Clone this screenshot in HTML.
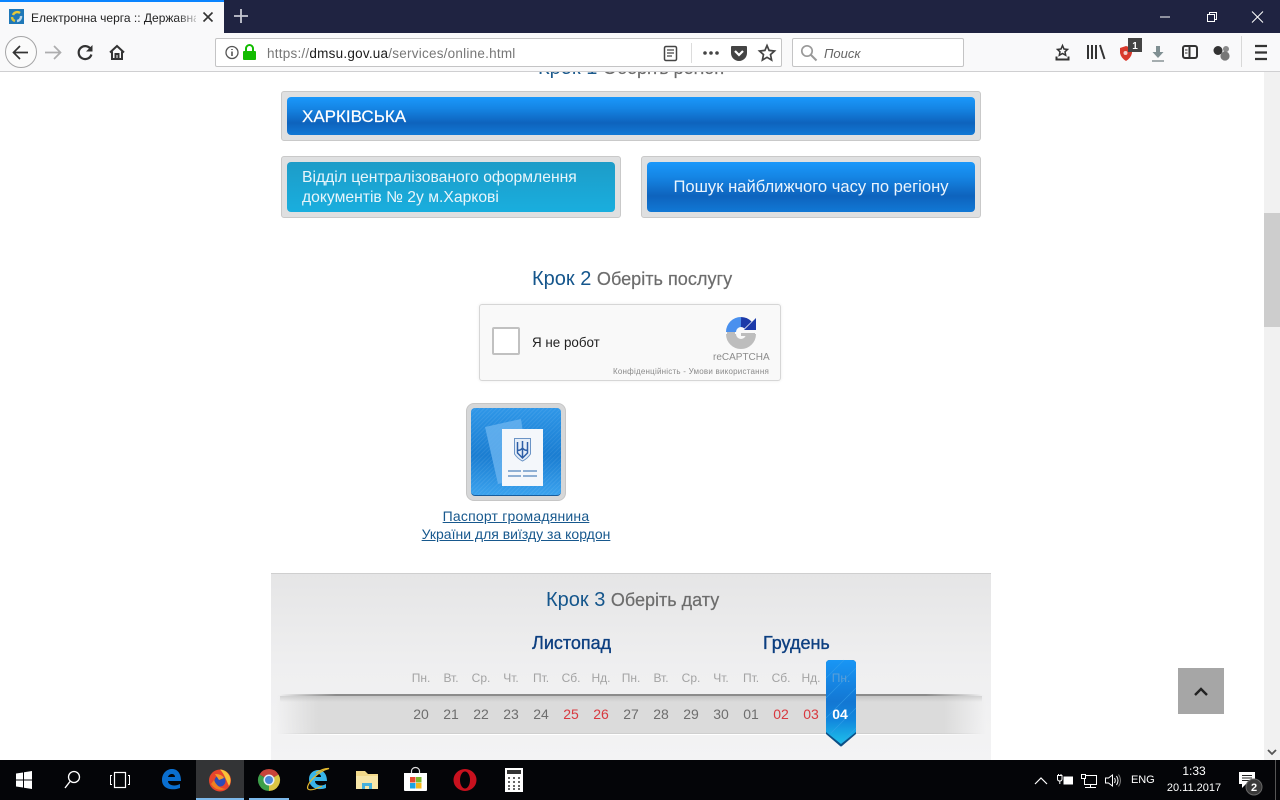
<!DOCTYPE html>
<html lang="uk"><head><meta charset="utf-8"><title>Електронна черга</title>
<style>
*{box-sizing:border-box}
html,body{margin:0;padding:0;width:1280px;height:800px;overflow:hidden;background:#fff;font-family:"Liberation Sans","DejaVu Sans",sans-serif}
.a{position:absolute}
.t{position:absolute;white-space:nowrap;line-height:1}
svg{position:absolute;overflow:visible}
.outer{position:absolute;background:#dfe0e1;border:1px solid #c9c9c9;border-radius:3px}
.inner{position:absolute;border-radius:4px;background:linear-gradient(#1a98fb 0%,#1585e4 30%,#0e63bd 68%,#1178d5 100%);color:#f4f9ff}
.d{position:absolute;top:672px;width:30px;text-align:center;font-size:12px;line-height:12px;color:#a3a3a3}
.n{position:absolute;top:707px;width:30px;text-align:center;font-size:14px;line-height:14px;color:#6e6e6e}
.r{color:#d8393f}
</style></head><body>

<!-- page -->
<div class="a" style="left:0;top:72px;width:1264px;height:688px;background:#fff"></div>
<div class="t" style="left:538px;top:58px;font-size:20px;color:#1c5a8c">Крок 1 <span style="color:#6b6b6b;font-size:18px;-webkit-text-stroke:.2px #6b6b6b">Оберіть регіон</span></div>

<div class="outer" style="left:281px;top:91px;width:700px;height:50px"></div>
<div class="inner" style="left:287px;top:97px;width:688px;height:38px"></div>
<div class="t" style="left:302px;top:108px;font-size:17px;color:#fff;-webkit-text-stroke:.2px #fff">ХАРКІВСЬКА</div>

<div class="outer" style="left:281px;top:156px;width:340px;height:62px"></div>
<div class="inner" style="left:287px;top:162px;width:328px;height:50px;background:linear-gradient(#1d9cc8,#19aede)"></div>
<div class="t" style="left:302px;top:168px;font-size:15.7px;line-height:20px;color:#e7f5fb;white-space:nowrap">Відділ централізованого оформлення<br>документів № 2у м.Харкові</div>

<div class="outer" style="left:641px;top:156px;width:340px;height:62px"></div>
<div class="inner" style="left:647px;top:162px;width:328px;height:50px"></div>
<div class="t" style="left:647px;width:328px;text-align:center;top:179px;font-size:16.6px;color:#eaf4fd">Пошук найближчого часу по регіону</div>

<div class="t" style="left:532px;top:269px;font-size:20px;color:#15568c">Крок 2 <span style="font-size:18.1px;color:#6c6c6c;-webkit-text-stroke:.2px #6c6c6c">Оберіть послугу</span></div>

<!-- recaptcha -->
<div class="a" style="left:479px;top:304px;width:302px;height:77px;background:#f9f9f9;border:1px solid #d6d6d6;border-radius:3px;box-shadow:0 0 3px rgba(0,0,0,.08)"></div>
<div class="a" style="left:492px;top:327px;width:28px;height:28px;background:#fff;border:2px solid #c1c1c1;border-radius:2px"></div>
<div class="t" style="left:532px;top:336px;font-size:13.4px;color:#222">Я не робот</div>
<svg style="left:725px;top:315px" width="32" height="32" viewBox="0 0 32 32">
<path d="M6 17 A10 10 0 0 1 16 7" fill="none" stroke="#4a90ee" stroke-width="10"/>
<path d="M2 12 H11 V17 H2 Z" fill="#4a90ee"/>
<path d="M16 7 A10 10 0 0 1 23 10" fill="none" stroke="#1c3aa9" stroke-width="10"/>
<path d="M31 3 V15 H19 Z" fill="#1c3aa9"/>
<path d="M26 19 A10 10 0 0 1 6 19" fill="none" stroke="#bdbdbd" stroke-width="10"/>
<path d="M2 17 H10 V20 H2 Z M16 18 H30 V21 H16 Z" fill="#bdbdbd"/>
</svg>
<div class="t" style="left:713px;top:353px;font-size:10px;color:#8c8c8c">reCAPTCHA</div>
<div class="t" style="left:613px;top:368px;font-size:8px;color:#8a8a8a;letter-spacing:.22px">Конфіденційність - Умови використання</div>

<!-- service tile -->
<div class="a" style="left:466px;top:403px;width:100px;height:98px;background:#d6d7d8;border:1px solid #c6c6c6;border-radius:8px"></div>
<div class="a" style="left:471px;top:408px;width:90px;height:88px;border-radius:4px;background:repeating-linear-gradient(135deg,rgba(255,255,255,.07) 0 1px,transparent 1px 3px),linear-gradient(#2f97e8,#1a7dd1 55%,#3aa2ee);border-bottom:1px solid #175d9e"></div>
<svg style="left:471px;top:408px" width="90" height="88" viewBox="0 0 90 88">
<polygon points="14,19 50,11 59,70 27,76" fill="#66b2ef" opacity=".85"/>
<rect x="31" y="21" width="41" height="57" fill="#f4f7fb"/>
<path d="M43.500 30.500 H59.500 V46 Q56 51 51.500 53 Q47 51 43.500 46 Z" fill="#e6eef8" stroke="#6b94c6" stroke-width="1"/>
<path d="M46.500 34 V45 L51.500 50 L56.500 45 V34 M51.500 33 V49 M46.500 42 Q49 43 51.500 40 Q54 43 56.500 42" fill="none" stroke="#2d5ea6" stroke-width="1.500"/>
<path d="M37 63 H50 M52 63 H66 M37 68 H50 M52 68 H66" stroke="#6d97c8" stroke-width="1.400"/>
</svg>
<div class="t" style="left:396px;width:240px;text-align:center;top:507px;font-size:14px;line-height:18px;color:#17588d;text-decoration:underline"><span style="letter-spacing:.2px">Паспорт громадянина</span><br>України для виїзду за кордон</div>

<!-- step 3 panel -->
<div class="a" style="left:271px;top:573px;width:720px;height:187px;background:linear-gradient(#e5e5e6,#efeff0 50%,#f3f3f4);border-top:1px solid #cfcfcf"></div>
<div class="t" style="left:546px;top:590px;font-size:20px;color:#15568c">Крок 3 <span style="font-size:18px;color:#6c6c6c;-webkit-text-stroke:.2px #6c6c6c">Оберіть дату</span></div>
<div class="t" style="left:532px;top:634px;font-size:18px;color:#0d3f80;-webkit-text-stroke:.35px #0d3f80">Листопад</div>
<div class="t" style="left:763px;top:634px;font-size:18px;color:#0d3f80;-webkit-text-stroke:.35px #0d3f80">Грудень</div>

<div class="a" style="left:276px;top:695px;width:710px;height:39px;background:linear-gradient(90deg,rgba(218,218,218,0) 0,#dbdbdb 42px,#dbdbdb 668px,rgba(218,218,218,0) 100%)"></div>
<div class="a" style="left:280px;top:694px;width:702px;height:2px;background:linear-gradient(90deg,rgba(110,110,110,0),#8b8b8b 8%,#8b8b8b 92%,rgba(110,110,110,0))"></div>
<div class="a" style="left:280px;top:696px;width:702px;height:6px;background:linear-gradient(rgba(130,130,130,.25),rgba(130,130,130,0))"></div>
<div class="a" style="left:280px;top:733px;width:702px;height:1px;background:linear-gradient(90deg,rgba(190,190,190,0),#cfcfcf 8%,#cfcfcf 92%,rgba(190,190,190,0))"></div>
<div class="a" style="left:280px;top:734px;width:702px;height:1px;background:linear-gradient(90deg,rgba(255,255,255,0),#fff 8%,#fff 92%,rgba(255,255,255,0))"></div>

<svg style="left:826px;top:660px" width="30" height="87" viewBox="0 0 30 87">
<defs><linearGradient id="rb" x1="0" y1="0" x2="0" y2="1"><stop offset="0" stop-color="#1996f5"/><stop offset=".5" stop-color="#1377d3"/><stop offset=".72" stop-color="#1288dd"/><stop offset="1" stop-color="#1dc0ea"/></linearGradient></defs>
<path d="M4 0 H26 Q30 0 30 4 V74 L16 86 Q15 87 14 86 L0 74 V4 Q0 0 4 0 Z" fill="#0d4f86"/>
<path d="M4 0 H26 Q30 0 30 4 V72 L15 84 L0 72 V4 Q0 0 4 0 Z" fill="url(#rb)"/>
<path d="M0 18 L18 0 M0 38 L30 8 M0 58 L30 28 M5 73 L30 48 M15 83 L30 68" stroke="#3aa3ec" stroke-width=".6" opacity=".7"/>
</svg>

<div class="d" style="left:406px">Пн.</div><div class="d" style="left:436px">Вт.</div><div class="d" style="left:466px">Ср.</div><div class="d" style="left:496px">Чт.</div><div class="d" style="left:526px">Пт.</div><div class="d" style="left:556px">Сб.</div><div class="d" style="left:586px">Нд.</div><div class="d" style="left:616px">Пн.</div><div class="d" style="left:646px">Вт.</div><div class="d" style="left:676px">Ср.</div><div class="d" style="left:706px">Чт.</div><div class="d" style="left:736px">Пт.</div><div class="d" style="left:766px">Сб.</div><div class="d" style="left:796px">Нд.</div><div class="d" style="left:826px;color:#5b9fd8">Пн.</div>

<div class="n" style="left:406px">20</div><div class="n" style="left:436px">21</div><div class="n" style="left:466px">22</div><div class="n" style="left:496px">23</div><div class="n" style="left:526px">24</div><div class="n r" style="left:556px">25</div><div class="n r" style="left:586px">26</div><div class="n" style="left:616px">27</div><div class="n" style="left:646px">28</div><div class="n" style="left:676px">29</div><div class="n" style="left:706px">30</div><div class="n" style="left:736px">01</div><div class="n r" style="left:766px">02</div><div class="n r" style="left:796px">03</div><div class="n" style="left:825px;color:#fff;font-weight:700">04</div>

<!-- back to top -->
<div class="a" style="left:1178px;top:668px;width:46px;height:46px;background:#a6a6a6"></div>
<svg style="left:1178px;top:668px" width="46" height="46"><path d="M17 27 L23 21 L29 27" fill="none" stroke="#222" stroke-width="2.400"/></svg>

<!-- scrollbar -->
<div class="a" style="left:1264px;top:72px;width:16px;height:688px;background:#f1f1f1"></div>
<div class="a" style="left:1264px;top:213px;width:16px;height:114px;background:#cdcdcd"></div>
<svg style="left:1264px;top:744px" width="16" height="16"><path d="M4 6 L8 10 L12 6" fill="none" stroke="#555" stroke-width="1.800"/></svg>

<!-- title bar -->
<div class="a" style="left:0;top:0;width:1280px;height:33px;background:#1f2341"></div>
<div class="a" style="left:0;top:0;width:224px;height:33px;background:#f9f9fa"></div>
<div class="a" style="left:0;top:0;width:224px;height:2px;background:#0a84ff"></div>
<div class="a" style="left:9px;top:9px;width:15px;height:15px;background:#1f78b8"></div>
<svg style="left:9px;top:9px" width="15" height="15" viewBox="0 0 15 15"><path d="M4 6 A4.500 4.500 0 0 1 11 4" fill="none" stroke="#e7c93a" stroke-width="2.400"/><path d="M12 7 A4.500 4.500 0 0 1 8 12" fill="none" stroke="#bcd9ea" stroke-width="2.400"/><path d="M6 12 A4.500 4.500 0 0 1 3 8" fill="none" stroke="#d9c43a" stroke-width="2.400"/></svg>
<div class="t" style="left:31px;top:11px;width:165px;overflow:hidden;font-size:12px;line-height:14px;color:#222;-webkit-mask-image:linear-gradient(90deg,#000 145px,rgba(0,0,0,.25) 165px)">Електронна черга :: Державна</div>
<svg style="left:202px;top:11px" width="12" height="12"><path d="M1.500 1.500 L10.500 10.500 M10.500 1.500 L1.500 10.500" stroke="#333" stroke-width="1.600"/></svg>
<svg style="left:233px;top:8px" width="16" height="16"><path d="M8 1 V15 M1 8 H15" stroke="#c6c8d2" stroke-width="1.800"/></svg>
<svg style="left:1160px;top:11px" width="110" height="12"><path d="M0 6 H10" stroke="#fff" stroke-width="1"/><path d="M47.500 3.500 H54.500 V10.500 H47.500 Z M49.500 3.500 V1.500 H56.500 V8.500 H54.500" fill="none" stroke="#fff"/><path d="M92 0.500 L103 11.500 M103 0.500 L92 11.500" stroke="#fff" stroke-width="1"/></svg>

<!-- toolbar -->
<div class="a" style="left:0;top:33px;width:1280px;height:39px;background:#f9f9fa;border-bottom:1px solid #cfcfd1"></div>
<div class="a" style="left:5px;top:36px;width:32px;height:32px;border:1px solid #a5a5a6;border-radius:50%;background:#fbfbfb"></div>
<svg style="left:0;top:33px" width="130" height="39" viewBox="0 0 130 39">
<path d="M13.500 19.500 H28 M20 13 L13.500 19.500 L20 26" fill="none" stroke="#333" stroke-width="1.700"/>
<path d="M45 19.500 H60 M54 13 L60.500 19.500 L54 26" fill="none" stroke="#adadae" stroke-width="1.700"/>
<path d="M90.600 16 A6.500 6.500 0 1 0 91.400 21.500" fill="none" stroke="#333" stroke-width="2.200"/><path d="M92.500 12 V18.500 H86 Z" fill="#333"/>
<path d="M110 19.500 L117 13 L124 19.500 M112 18.500 V26 H122 V18.500 M115.500 26 V21 H118.500 V26" fill="none" stroke="#333" stroke-width="2"/>
</svg>

<div class="a" style="left:215px;top:38px;width:567px;height:29px;background:#fff;border:1px solid #c4c4c5;border-radius:2px"></div>
<svg style="left:215px;top:38px" width="567" height="29" viewBox="0 0 567 29">
<circle cx="17" cy="14.500" r="6" fill="none" stroke="#555" stroke-width="1.300"/><path d="M17 13.500 V18 M17 11 V12" stroke="#555" stroke-width="1.600"/>
<rect x="28" y="13" width="13" height="9" rx="1" fill="#12bc00"/><path d="M31 13 V10.500 A3.500 3.500 0 0 1 38 10.500 V13" fill="none" stroke="#12bc00" stroke-width="2"/>
<rect x="449.500" y="8.500" width="12" height="14" rx="1.500" fill="none" stroke="#444" stroke-width="1.500"/><path d="M452 12 H459 M452 15 H459 M452 18 H457" stroke="#444" stroke-width="1.200"/>
<path d="M476.500 5 V25" stroke="#dcdcdc"/>
<circle cx="490" cy="15" r="1.800" fill="#444"/><circle cx="496" cy="15" r="1.800" fill="#444"/><circle cx="502" cy="15" r="1.800" fill="#444"/>
<path d="M516 8 H531 Q532 8 532 9 V15 A8 8 0 0 1 516 15 V9 Q516 8 517 8 Z" fill="#444"/><path d="M520 13 L524 17 L528 13" fill="none" stroke="#fff" stroke-width="2.200"/>
<path d="M552 7.500 L554.100 12.400 L559.500 13 L555.500 16.600 L556.600 22 L552 19.300 L547.400 22 L548.500 16.600 L544.500 13 L549.900 12.400 Z" fill="none" stroke="#444" stroke-width="1.700"/>
</svg>
<div class="t" style="left:267px;top:47px;font-size:13.5px;color:#777;letter-spacing:.235px">https://<span style="color:#1c1c1c">dmsu.gov.ua</span>/services/online.html</div>

<div class="a" style="left:792px;top:38px;width:172px;height:29px;background:#fff;border:1px solid #c4c4c5;border-radius:2px"></div>
<svg style="left:800px;top:44px" width="18" height="18"><circle cx="7" cy="7" r="5.200" fill="none" stroke="#999" stroke-width="1.700"/><path d="M11 11 L16.500 16.500" stroke="#999" stroke-width="2"/></svg>
<div class="t" style="left:824px;top:47px;font-size:13px;font-style:italic;color:#666">Поиск</div>

<svg style="left:1040px;top:33px" width="240" height="39" viewBox="0 0 240 39">
<path d="M22.500 12.500 L24 16 L27.500 16.400 L25 18.800 L25.700 22.300 L22.500 20.500 L19.300 22.300 L20 18.800 L17.500 16.400 L21 16 Z" fill="none" stroke="#333" stroke-width="1.500"/><path d="M16.500 23.500 V26.500 H28.500 V23.500" fill="none" stroke="#333" stroke-width="2"/>
<path d="M48 12 V26 M52 12 V26 M56 12 V26" stroke="#333" stroke-width="2"/><path d="M60 12 L64.500 26" stroke="#333" stroke-width="2"/>
<path d="M80 15 L86 13 L92 15 V20 Q91 25 86 28 Q81 25 80 20 Z" fill="#d8392c"/><circle cx="85.500" cy="20" r="2" fill="#f2d0cc"/>
<rect x="88" y="5" width="14" height="14" fill="#444"/>
<text x="95" y="16" font-size="10" font-weight="700" text-anchor="middle" fill="#fff" font-family="Liberation Sans">1</text>
<path d="M118 13 V20" stroke="#7f8f92" stroke-width="4"/><path d="M112.500 19 H123.500 L118 25 Z" fill="#7f8f92"/><path d="M112 28 H124" stroke="#a5adaf" stroke-width="2"/>
<rect x="143" y="13" width="14" height="12" rx="2" fill="none" stroke="#333" stroke-width="2"/><path d="M149.500 13 V25" stroke="#333" stroke-width="2"/><path d="M145 17 H147.500 M145 20 H147.500" stroke="#333" stroke-width="1"/>
<circle cx="178" cy="17.500" r="4.500" fill="#333"/><circle cx="186" cy="16" r="3" fill="#8a8a8a"/><circle cx="185" cy="23" r="4.600" fill="#777"/>
<path d="M201.500 3 V34" stroke="#d8d8d8"/>
<path d="M215 13 H227 M215 19.500 H227 M215 26 H227" stroke="#333" stroke-width="2.200"/>
</svg>

<!-- taskbar -->
<div class="a" style="left:0;top:760px;width:1280px;height:40px;background:#040508"></div>
<div class="a" style="left:196px;top:760px;width:48px;height:40px;background:#333436"></div>
<div class="a" style="left:196px;top:798px;width:48px;height:2px;background:#7cb8ea"></div>
<div class="a" style="left:249px;top:798px;width:40px;height:2px;background:#7cb8ea"></div>
<svg style="left:0;top:760px" width="540" height="40" viewBox="0 0 540 40">
<path d="M16 13.500 L23 12.500 V19.500 H16 Z M24 12.300 L32 11 V19.500 H24 Z M16 20.500 H23 V27.500 L16 26.500 Z M24 20.500 H32 V29 L24 27.700 Z" fill="#fff"/>
<circle cx="74" cy="17" r="5.500" fill="none" stroke="#fff" stroke-width="1.300"/><path d="M70 21.500 L65 28" stroke="#fff" stroke-width="1.400"/>
<rect x="114.500" y="12.500" width="11" height="15" fill="none" stroke="#fff" stroke-width="1.200"/><path d="M112 15.500 H110.500 V24.500 H112 M128 15.500 H129.500 V24.500 H128" fill="none" stroke="#fff"/>
<path d="M162 20 C162 13 167 9 172 9 C178 9 181 14 181 21 H168 C168 25 174 27 180 24 V28 C172 31 162 29 162 20 Z M168 17 H175 C175 13 169 13 168 17 Z" fill="#0a6fd0" fill-rule="evenodd"/>
<circle cx="220" cy="20.500" r="11" fill="#e8452c"/><path d="M220 9.500 A11 11 0 0 1 229 26 C226 20 225 15 220 9.500 Z" fill="#f7c33a"/><circle cx="220" cy="21" r="5.500" fill="#2f4bb5"/><path d="M215 14 Q222 14 224 18 L219 20 Z" fill="#f79a2a"/><path d="M211 24 Q216 32 226 29 Q217 28 214 20 Z" fill="#f0801f"/>
<path d="M262.070 16 A8 8 0 0 1 275.930 16" fill="none" stroke="#c8443a" stroke-width="6"/>
<path d="M275.930 16 A8 8 0 0 1 269 28" fill="none" stroke="#d9c544" stroke-width="6"/>
<path d="M269 28 A8 8 0 0 1 262.070 16" fill="none" stroke="#3d9f4a" stroke-width="6"/>
<circle cx="269" cy="20" r="5.500" fill="#e6eef8"/><circle cx="269" cy="20" r="4" fill="#4a86d8"/>
<path d="M309 19 C309 13 314 10 318 10 C324 10 327 15 327 21 H315 C315 25 321 27 326 24 V28 C318 31 309 28 309 19 Z M315 17 H321 C321 13 316 13 315 17 Z" fill="#38b4e8" fill-rule="evenodd"/>
<path d="M308 29 C305 25 318 11 329 8.500 C326 8 320 10 316 13 M308 29 C310 31 316 29 322 26" fill="none" stroke="#e3b92f" stroke-width="1.200"/>
<path d="M356 11 H365 L368 14 H378 V29 H356 Z" fill="#f2d98a"/><path d="M356 16 H378 V29 H356 Z" fill="#f7e6a8"/><path d="M362 29 V23 H372 V29 H369 V26 H365 V29 Z" fill="#46b1dc"/>
<path d="M404 13 H427 V30 Q427 31 426 31 H405 Q404 31 404 30 Z" fill="#fff"/><path d="M411.500 13 V11 A4 3.500 0 0 1 419.500 11 V13" fill="none" stroke="#ddd" stroke-width="1.200"/><rect x="410" y="17" width="5.500" height="5.500" fill="#e74a2f"/><rect x="416" y="17" width="5.500" height="5.500" fill="#7db82c"/><rect x="410" y="23" width="5.500" height="5.500" fill="#1ea3e3"/><rect x="416" y="23" width="5.500" height="5.500" fill="#f8b81d"/>
<ellipse cx="465" cy="20" rx="11.500" ry="11" fill="#c8111e"/><ellipse cx="465" cy="20" rx="5" ry="8.500" fill="#040508"/>
<rect x="505" y="8" width="18" height="24" fill="#fff"/><rect x="507" y="10" width="14" height="4" fill="#333"/><path d="M508 18 h2 M513 18 h2 M518 18 h2 M508 22 h2 M513 22 h2 M518 22 h2 M508 26 h2 M513 26 h2 M518 26 h2 M508 29 h2 M513 29 h2 M518 29 h2" stroke="#333" stroke-width="1.600"/>
</svg>

<svg style="left:1030px;top:760px" width="250" height="40" viewBox="0 0 250 40">
<path d="M5 24 L11 18 L17 24" fill="none" stroke="#fff" stroke-width="1.200"/>
<path d="M27.500 15.500 H32 V19 Q32 21 29.800 21 Q27.500 21 27.500 19 Z M28.500 14 V15.500 M31 14 V15.500 M29.800 21 V24" fill="none" stroke="#fff"/><rect x="33.500" y="16.500" width="9.500" height="8" fill="#fff"/>
<path d="M54.500 15.500 H66.500 V24.500 H54.500 Z M60.500 24.500 V27.500 M55 27.500 H66" fill="none" stroke="#fff"/><rect x="51.500" y="14.500" width="4" height="4" fill="#040508" stroke="#fff"/>
<path d="M75.500 18 H78.500 L82.500 15 V26 L78.500 23 H75.500 Z" fill="none" stroke="#fff"/><path d="M84.500 18 Q86 20.500 84.500 23 M86.500 16 Q89.500 20.500 86.500 25" fill="none" stroke="#fff"/><path d="M88.500 14.500 Q92.500 20.500 88.500 26.500" fill="none" stroke="#777"/>
<path d="M209 12 H225 V24 H216 L212 28 V24 H209 Z" fill="#fff"/><path d="M212 15.500 H222 M212 18 H222 M212 20.500 H222" stroke="#222"/>
<circle cx="224" cy="27" r="8" fill="#3a3a3a" stroke="#666"/>
<text x="224" y="31" font-size="11" font-weight="700" text-anchor="middle" fill="#fff" font-family="Liberation Sans">2</text>
</svg>
<div class="t" style="left:1131px;top:775px;font-size:11px;color:#fff;letter-spacing:-.1px">ENG</div>
<div class="t" style="left:1166px;width:56px;text-align:center;top:765px;font-size:12px;color:#fff">1:33</div>
<div class="t" style="left:1166px;width:56px;text-align:center;top:783px;font-size:11px;color:#fff">20.11.2017</div>
<div class="a" style="left:1275px;top:760px;width:1px;height:40px;background:#555"></div>
</body></html>
